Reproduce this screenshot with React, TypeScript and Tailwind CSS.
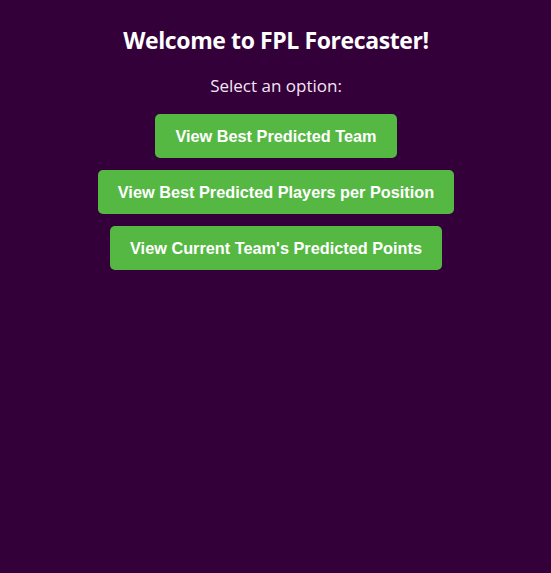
export default function App() {
  const buttons = [
    "View Best Predicted Team",
    "View Best Predicted Players per Position",
    "View Current Team's Predicted Points",
  ];
  return (
    <div className="min-h-[573px] w-full bg-[#34003a] flex flex-col items-center pt-[25px]" style={{ fontFamily: '"Open Sans", "Noto Sans", sans-serif' }}>
      <h1 className="text-[23px] leading-[30px] font-bold text-white m-0 tracking-[-0.4px] pl-[1px]">Welcome to FPL Forecaster!</h1>
      <p className="mt-[19px] text-[17px] leading-[24px] text-[#f3e6f3] pl-[1px]">Select an option:</p>
      <div className="mt-[16px] flex flex-col items-center gap-[12px] pl-[1px]">
        {buttons.map((b) => (
          <button
            key={b}
            className="bg-[#55b843] text-white font-bold text-[16.3px] leading-[19px] px-[20px] py-[12.5px] rounded-[5px]"
            style={{ fontFamily: '"Liberation Sans", Arial, sans-serif' }}
          >
            {b}
          </button>
        ))}
      </div>
    </div>
  );
}
